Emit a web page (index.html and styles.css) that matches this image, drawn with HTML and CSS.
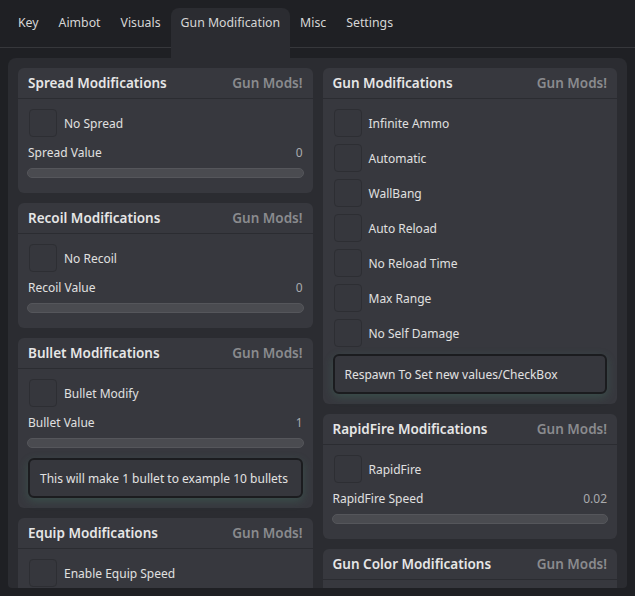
FILE: index.html
```html
<!doctype html>
<html>
<head>
<meta charset="utf-8">
<title>Gun Modification</title>
<link rel="stylesheet" href="styles.css">
</head>
<body>
<div class="tabbar">
	<div class="tab">Key</div>
	<div class="tab">Aimbot</div>
	<div class="tab">Visuals</div>
	<div class="tab active">Gun Modification</div>
	<div class="tab">Misc</div>
	<div class="tab">Settings</div>
</div>
<div class="panel">
	<div class="col">
		<div class="sec">
			<div class="sec-head"><span class="title">Spread Modifications</span><span class="tag">Gun Mods!</span></div>
			<div class="sec-body">
				<div class="check"><span class="box"></span>No Spread</div>
				<div class="value-row"><span>Spread Value</span><span>0</span></div>
				<div class="track"></div>
			</div>
		</div>
		<div class="sec">
			<div class="sec-head"><span class="title">Recoil Modifications</span><span class="tag">Gun Mods!</span></div>
			<div class="sec-body">
				<div class="check"><span class="box"></span>No Recoil</div>
				<div class="value-row"><span>Recoil Value</span><span>0</span></div>
				<div class="track"></div>
			</div>
		</div>
		<div class="sec">
			<div class="sec-head"><span class="title">Bullet Modifications</span><span class="tag">Gun Mods!</span></div>
			<div class="sec-body">
				<div class="check"><span class="box"></span>Bullet Modify</div>
				<div class="value-row"><span>Bullet Value</span><span>1</span></div>
				<div class="track"></div>
				<div class="note">This will make 1 bullet to example 10 bullets</div>
			</div>
		</div>
		<div class="sec">
			<div class="sec-head"><span class="title">Equip Modifications</span><span class="tag">Gun Mods!</span></div>
			<div class="sec-body more">
				<div class="check"><span class="box"></span>Enable Equip Speed</div>
			</div>
		</div>
	</div>
	<div class="col">
		<div class="sec">
			<div class="sec-head"><span class="title">Gun Modifications</span><span class="tag">Gun Mods!</span></div>
			<div class="sec-body">
				<div class="check"><span class="box"></span>Infinite Ammo</div>
				<div class="check"><span class="box"></span>Automatic</div>
				<div class="check"><span class="box"></span>WallBang</div>
				<div class="check"><span class="box"></span>Auto Reload</div>
				<div class="check"><span class="box"></span>No Reload Time</div>
				<div class="check"><span class="box"></span>Max Range</div>
				<div class="check"><span class="box"></span>No Self Damage</div>
				<div class="note">Respawn To Set new values/CheckBox</div>
			</div>
		</div>
		<div class="sec">
			<div class="sec-head"><span class="title">RapidFire Modifications</span><span class="tag">Gun Mods!</span></div>
			<div class="sec-body">
				<div class="check"><span class="box"></span>RapidFire</div>
				<div class="value-row"><span>RapidFire Speed</span><span>0.02</span></div>
				<div class="track"></div>
			</div>
		</div>
		<div class="sec">
			<div class="sec-head"><span class="title">Gun Color Modifications</span><span class="tag">Gun Mods!</span></div>
			<div class="sec-body more"></div>
		</div>
	</div>
</div>
</body>
</html>
```
FILE: styles.css
```css
*{padding:0; margin:0; box-sizing:border-box;}
body{background:#1f2024; font-family:"Noto Sans", "Liberation Sans", sans-serif; color:#dedede; overflow:hidden;}

.tabbar{display:flex; align-items:flex-start; height:48px; padding:8px 8px 0; border-bottom:1px solid #36373b;}
.tab{padding:0 10px; height:30px; line-height:30px; font-size:12.3px; color:#d6d6d6;}
.tab.active{height:50px; background:#2b2c31; border-radius:8px 8px 0 0; position:relative; z-index:1;}

.panel{height:530px; margin:10px 8px 0; padding:10px; background:#2b2c31; border-radius:8px 8px 4px 4px; overflow:hidden; display:grid; grid-template-columns:1fr 1fr; gap:10px; align-items:start;}
.col{display:flex; flex-direction:column; gap:10px;}

.sec{background:#37383e; border-radius:6px;}
.sec-head{height:31px; padding:0 10px; display:flex; align-items:center; justify-content:space-between; border-bottom:1px solid #2b2c31; font-size:13.5px; font-weight:600;}
.title{color:#e6e6e6;}
.tag{color:#8a8b8e;}
.sec-body{padding:10px;}
.sec-body.more{min-height:80px;}

.check{display:flex; align-items:center; height:28px; margin:0 0 7px 1px; font-size:12px; color:#e0e0e0;}
.check:last-child{margin-bottom:0;}
.box{width:28px; height:28px; margin-right:7px; border:1px solid #2d2e33; border-radius:4px; background:#36373d;}

.value-row{display:flex; justify-content:space-between; height:18px; line-height:18px; font-size:12px; color:#e0e0e0;}
.value-row span:last-child{color:#a9aaad;}
.track{height:10px; margin:6px -1px 5px; background:#4a4b50; border:1px solid #55565b; border-radius:5px;}

.note{height:40px; padding:0 10px; display:flex; align-items:center; font-size:12px; color:#e2e2e2; background:#36373d; border:2px solid #1b1c1f; border-radius:6px; box-shadow:0 3px 10px rgba(70,140,110,0.28);}
.track + .note{margin-top:10px;}
```
